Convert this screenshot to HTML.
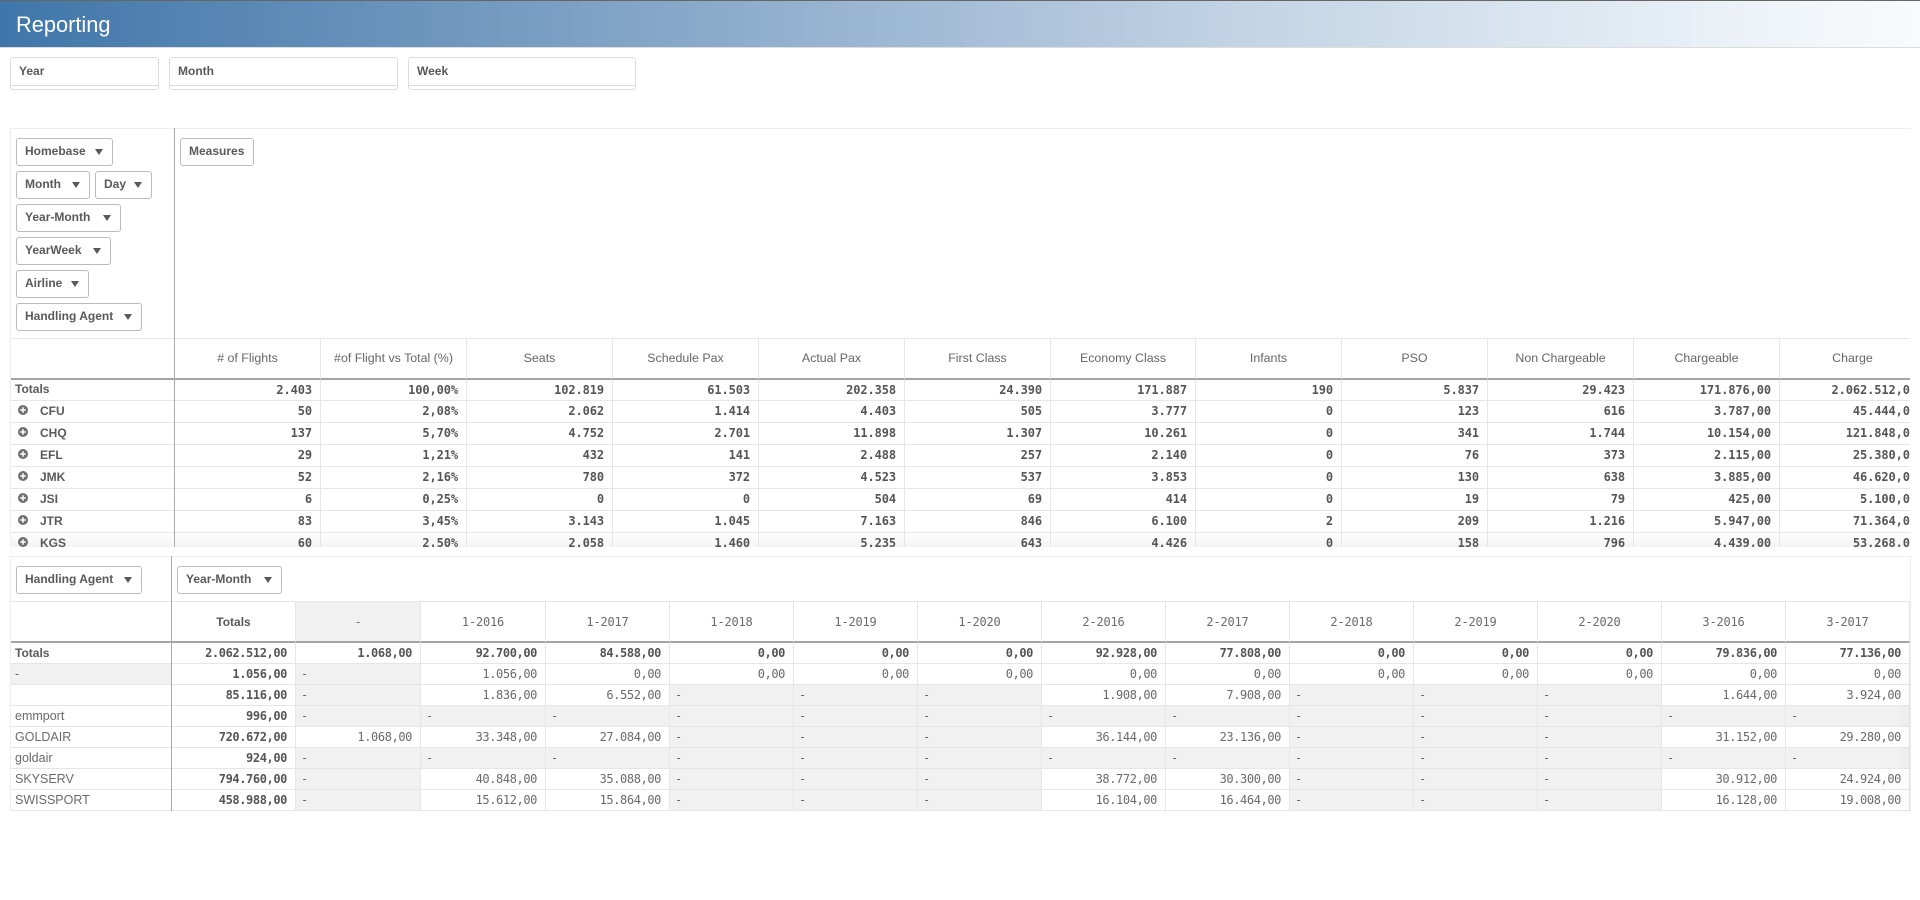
<!DOCTYPE html>
<html lang="en"><head><meta charset="utf-8"><title>Reporting</title>
<style>
html,body{margin:0;padding:0;background:#fff}
body{width:1920px;height:900px;overflow:hidden;position:relative;font-family:"Liberation Sans",sans-serif;color:#595959}
.a{position:absolute}
#hdr{left:0;top:0;width:1920px;height:47px;background:linear-gradient(90deg,#3f76a9 0%,#85a6c8 34%,#c3d4e5 65%,#f4f8fb 96%,#f8fafc 100%);border-top:1px solid #666;box-sizing:border-box;border-bottom:0}
#hl{left:0;top:47px;width:1920px;height:1px;background:#ddd}
#hdr span{position:absolute;left:16px;top:9px;font-size:21.8px;line-height:30px;color:#fff}
.f{box-sizing:border-box;height:33px;top:57px;border:1px solid #ddd;border-radius:3px;font-size:12px;font-weight:bold;line-height:27px;padding-left:8px}
.f:after{content:"";position:absolute;left:0;right:0;top:27px;border-top:1px solid #ddd}
.b{box-sizing:border-box;height:28px;border:1px solid #bbb;border-radius:3px;font-size:12px;font-weight:bold;line-height:25px;padding-left:8px;white-space:nowrap;background:#fff}
.b i{position:absolute;right:9px;top:10px;width:0;height:0;border-left:4px solid transparent;border-right:4px solid transparent;border-top:6px solid #595959}
.fr{border:1px solid #eee;box-sizing:border-box}
.sep{width:1px;background:#aaa}
table{border-collapse:separate;border-spacing:0;table-layout:fixed;position:absolute;left:0;top:0}
td{padding:0 8px 0 0;box-sizing:border-box;border-right:1px solid #e6e6e6;border-bottom:1px solid #e6e6e6;text-align:right;white-space:nowrap;overflow:hidden;font-family:"DejaVu Sans Mono","Liberation Mono",monospace;font-size:12px;color:#6a6a6a;line-height:16px}
td.l{text-align:left;font-family:"Liberation Sans",sans-serif;padding-left:5px;font-size:12.5px}
td.n{font-weight:bold;color:#555}
td.h{text-align:center;padding:0 0 2px;font-family:"Liberation Sans",sans-serif;font-size:12.4px;color:#666;border-top:1px solid #e6e6e6;border-bottom:2px solid #a5a5a5}
td.lb{text-align:left;font-family:"Liberation Sans",sans-serif;font-weight:bold;font-size:12px;color:#595959;padding:0 0 2px}
td.g{background:#f1f1f1}
td.d{text-align:left;padding:0 0 0 5px;background:#f1f1f1}
#t1 td{height:22px;letter-spacing:-.1px;padding-bottom:2px}
#t1 td.lb,#t1 td.h{letter-spacing:0}
#t1 tr.hr td{height:42px}
#t1 tr.tr td{height:21px;padding-bottom:0}
#t1 tr.tr td.lb{padding-bottom:2px}
#t1 tr.k td{background:linear-gradient(#fff,#eee)}
#t1 td.lb svg{position:absolute;left:7px;margin-top:2px}
#t1 td.lb span{padding-left:29px}
#t2 td{height:21px;letter-spacing:-.4px}
#t2 td.l,#t2 td.lb{letter-spacing:0;padding-bottom:0}
#t2 tr.hr td{height:42px}
#t2 td.hm{text-align:center;padding:0;border-top:1px solid #e6e6e6;border-bottom:2px solid #a5a5a5;letter-spacing:-.2px}
#t2 td.ht{text-align:center;padding:0;border-top:1px solid #e6e6e6;border-bottom:2px solid #a5a5a5;font-family:"Liberation Sans",sans-serif;font-weight:bold;font-size:12px;letter-spacing:0;color:#595959}
</style></head><body>
<div id="hdr" class="a"><span>Reporting</span></div><div id="hl" class="a"></div>
<div class="a f" style="left:10px;width:149px">Year</div>
<div class="a f" style="left:169px;width:229px">Month</div>
<div class="a f" style="left:408px;width:228px">Week</div>

<div class="a fr" style="left:10px;top:128px;width:1901px;height:420px;border-bottom:0;border-right:0"></div>
<div class="a b" style="left:16px;top:138px;width:97px">Homebase<i></i></div>
<div class="a b" style="left:16px;top:171px;width:74px">Month<i></i></div>
<div class="a b" style="left:95px;top:171px;width:57px">Day<i></i></div>
<div class="a b" style="left:16px;top:204px;width:105px">Year-Month<i></i></div>
<div class="a b" style="left:16px;top:237px;width:95px">YearWeek<i></i></div>
<div class="a b" style="left:16px;top:270px;width:73px">Airline<i></i></div>
<div class="a b" style="left:16px;top:303px;width:126px">Handling Agent<i></i></div>
<div class="a b" style="left:180px;top:138px;width:74px">Measures</div>

<svg width="0" height="0" style="position:absolute"><defs><symbol id="p" viewBox="0 0 10 10"><circle cx="5" cy="5" r="5" fill="#707070"/><path d="M2.2 5H7.8M5 2.2V7.8" stroke="#fff" stroke-width="1.5" fill="none"/></symbol></defs></svg>

<div class="a" style="left:11px;top:338px;width:1899px;height:209px;overflow:hidden">
<table id="t1" style="width:1915px">
<colgroup><col style="width:164px"><col style="width:146px"><col style="width:146px"><col style="width:146px"><col style="width:146px"><col style="width:146px"><col style="width:146px"><col style="width:145px"><col style="width:146px"><col style="width:146px"><col style="width:146px"><col style="width:146px"><col style="width:146px"></colgroup>
<tr class="hr"><td class="h"></td><td class="h"># of Flights</td><td class="h">#of Flight vs Total (%)</td><td class="h">Seats</td><td class="h">Schedule Pax</td><td class="h">Actual Pax</td><td class="h">First Class</td><td class="h">Economy Class</td><td class="h">Infants</td><td class="h">PSO</td><td class="h">Non Chargeable</td><td class="h">Chargeable</td><td class="h">Charge</td></tr>
<tr class="tr"><td class="lb"><span style="padding-left:4px">Totals</span></td><td class="n">2.403</td><td class="n">100,00%</td><td class="n">102.819</td><td class="n">61.503</td><td class="n">202.358</td><td class="n">24.390</td><td class="n">171.887</td><td class="n">190</td><td class="n">5.837</td><td class="n">29.423</td><td class="n">171.876,00</td><td class="n">2.062.512,00</td></tr>
<tr><td class="lb"><svg width="10" height="10"><use href="#p"/></svg><span>CFU</span></td><td class="n">50</td><td class="n">2,08%</td><td class="n">2.062</td><td class="n">1.414</td><td class="n">4.403</td><td class="n">505</td><td class="n">3.777</td><td class="n">0</td><td class="n">123</td><td class="n">616</td><td class="n">3.787,00</td><td class="n">45.444,00</td></tr>
<tr><td class="lb"><svg width="10" height="10"><use href="#p"/></svg><span>CHQ</span></td><td class="n">137</td><td class="n">5,70%</td><td class="n">4.752</td><td class="n">2.701</td><td class="n">11.898</td><td class="n">1.307</td><td class="n">10.261</td><td class="n">0</td><td class="n">341</td><td class="n">1.744</td><td class="n">10.154,00</td><td class="n">121.848,00</td></tr>
<tr><td class="lb"><svg width="10" height="10"><use href="#p"/></svg><span>EFL</span></td><td class="n">29</td><td class="n">1,21%</td><td class="n">432</td><td class="n">141</td><td class="n">2.488</td><td class="n">257</td><td class="n">2.140</td><td class="n">0</td><td class="n">76</td><td class="n">373</td><td class="n">2.115,00</td><td class="n">25.380,00</td></tr>
<tr><td class="lb"><svg width="10" height="10"><use href="#p"/></svg><span>JMK</span></td><td class="n">52</td><td class="n">2,16%</td><td class="n">780</td><td class="n">372</td><td class="n">4.523</td><td class="n">537</td><td class="n">3.853</td><td class="n">0</td><td class="n">130</td><td class="n">638</td><td class="n">3.885,00</td><td class="n">46.620,00</td></tr>
<tr><td class="lb"><svg width="10" height="10"><use href="#p"/></svg><span>JSI</span></td><td class="n">6</td><td class="n">0,25%</td><td class="n">0</td><td class="n">0</td><td class="n">504</td><td class="n">69</td><td class="n">414</td><td class="n">0</td><td class="n">19</td><td class="n">79</td><td class="n">425,00</td><td class="n">5.100,00</td></tr>
<tr><td class="lb"><svg width="10" height="10"><use href="#p"/></svg><span>JTR</span></td><td class="n">83</td><td class="n">3,45%</td><td class="n">3.143</td><td class="n">1.045</td><td class="n">7.163</td><td class="n">846</td><td class="n">6.100</td><td class="n">2</td><td class="n">209</td><td class="n">1.216</td><td class="n">5.947,00</td><td class="n">71.364,00</td></tr>
<tr class="k"><td class="lb"><svg width="10" height="10"><use href="#p"/></svg><span>KGS</span></td><td class="n">60</td><td class="n">2,50%</td><td class="n">2.058</td><td class="n">1.460</td><td class="n">5.235</td><td class="n">643</td><td class="n">4.426</td><td class="n">0</td><td class="n">158</td><td class="n">796</td><td class="n">4.439,00</td><td class="n">53.268,00</td></tr>
</table></div>
<div class="a sep" style="left:174px;top:128px;height:419px"></div>
<div class="a" style="left:175px;top:338px;width:1735px;height:1px;background:#e6e6e6"></div>

<div class="a fr" style="left:10px;top:556px;width:1901px;height:255px"></div>
<div class="a b" style="left:16px;top:566px;width:126px">Handling Agent<i></i></div>
<div class="a b" style="left:177px;top:566px;width:105px">Year-Month<i></i></div>

<div class="a" style="left:11px;top:601px;width:1899px;height:210px;overflow:hidden">
<table id="t2" style="width:1899px">
<colgroup><col style="width:161px"><col style="width:124px"><col style="width:125px"><col style="width:125px"><col style="width:124px"><col style="width:124px"><col style="width:124px"><col style="width:124px"><col style="width:124px"><col style="width:124px"><col style="width:124px"><col style="width:124px"><col style="width:124px"><col style="width:124px"><col style="width:124px"></colgroup>
<tr class="hr"><td class="h"></td><td class="ht">Totals</td><td class="hm g">-</td><td class="hm">1-2016</td><td class="hm">1-2017</td><td class="hm">1-2018</td><td class="hm">1-2019</td><td class="hm">1-2020</td><td class="hm">2-2016</td><td class="hm">2-2017</td><td class="hm">2-2018</td><td class="hm">2-2019</td><td class="hm">2-2020</td><td class="hm">3-2016</td><td class="hm">3-2017</td></tr>
<tr><td class="lb"><span style="padding-left:4px">Totals</span></td><td class="n">2.062.512,00</td><td class="n">1.068,00</td><td class="n">92.700,00</td><td class="n">84.588,00</td><td class="n">0,00</td><td class="n">0,00</td><td class="n">0,00</td><td class="n">92.928,00</td><td class="n">77.808,00</td><td class="n">0,00</td><td class="n">0,00</td><td class="n">0,00</td><td class="n">79.836,00</td><td class="n">77.136,00</td></tr>
<tr><td class="l g" style="padding-left:4px">-</td><td class="n">1.056,00</td><td class="d">-</td><td>1.056,00</td><td>0,00</td><td>0,00</td><td>0,00</td><td>0,00</td><td>0,00</td><td>0,00</td><td>0,00</td><td>0,00</td><td>0,00</td><td>0,00</td><td>0,00</td></tr>
<tr><td class="l" style="padding-left:4px"></td><td class="n">85.116,00</td><td class="d">-</td><td>1.836,00</td><td>6.552,00</td><td class="d">-</td><td class="d">-</td><td class="d">-</td><td>1.908,00</td><td>7.908,00</td><td class="d">-</td><td class="d">-</td><td class="d">-</td><td>1.644,00</td><td>3.924,00</td></tr>
<tr><td class="l" style="padding-left:4px">emmport</td><td class="n">996,00</td><td class="d">-</td><td class="d">-</td><td class="d">-</td><td class="d">-</td><td class="d">-</td><td class="d">-</td><td class="d">-</td><td class="d">-</td><td class="d">-</td><td class="d">-</td><td class="d">-</td><td class="d">-</td><td class="d">-</td></tr>
<tr><td class="l" style="padding-left:4px">GOLDAIR</td><td class="n">720.672,00</td><td>1.068,00</td><td>33.348,00</td><td>27.084,00</td><td class="d">-</td><td class="d">-</td><td class="d">-</td><td>36.144,00</td><td>23.136,00</td><td class="d">-</td><td class="d">-</td><td class="d">-</td><td>31.152,00</td><td>29.280,00</td></tr>
<tr><td class="l" style="padding-left:4px">goldair</td><td class="n">924,00</td><td class="d">-</td><td class="d">-</td><td class="d">-</td><td class="d">-</td><td class="d">-</td><td class="d">-</td><td class="d">-</td><td class="d">-</td><td class="d">-</td><td class="d">-</td><td class="d">-</td><td class="d">-</td><td class="d">-</td></tr>
<tr><td class="l" style="padding-left:4px">SKYSERV</td><td class="n">794.760,00</td><td class="d">-</td><td>40.848,00</td><td>35.088,00</td><td class="d">-</td><td class="d">-</td><td class="d">-</td><td>38.772,00</td><td>30.300,00</td><td class="d">-</td><td class="d">-</td><td class="d">-</td><td>30.912,00</td><td>24.924,00</td></tr>
<tr><td class="l" style="padding-left:4px">SWISSPORT</td><td class="n">458.988,00</td><td class="d">-</td><td>15.612,00</td><td>15.864,00</td><td class="d">-</td><td class="d">-</td><td class="d">-</td><td>16.104,00</td><td>16.464,00</td><td class="d">-</td><td class="d">-</td><td class="d">-</td><td>16.128,00</td><td>19.008,00</td></tr>
</table></div>
<div class="a sep" style="left:171px;top:556px;height:255px"></div>
<div class="a" style="left:1899px;top:664px;width:11px;height:150px;background:linear-gradient(90deg,rgba(0,0,0,0),rgba(0,0,0,.025))"></div>
</body></html>
